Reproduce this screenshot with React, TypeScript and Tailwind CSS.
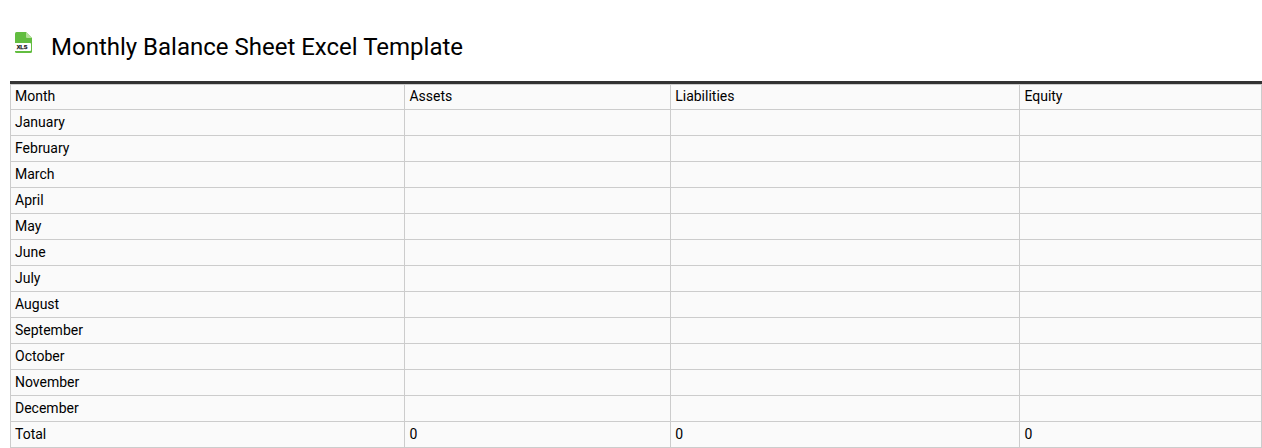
const months = ["January", "February", "March", "April", "May", "June", "July", "August", "September", "October", "November", "December"];

function XlsIcon() {
    return (
        <svg width="20" height="22" viewBox="0 0 20 22" className="shrink-0">
            <path d="M2 1.5 A1.5 1.5 0 0 1 3.5 0 H13 L19 6 V19.5 A1.5 1.5 0 0 1 17.5 21 H3.5 A1.5 1.5 0 0 1 2 19.5 Z" fill="#62bd40" />
            <path d="M13 0 L19 6 H14 A1 1 0 0 1 13 5 Z" fill="#b4e09a" />
            <rect x="0" y="11" width="18" height="8" rx="1" fill="#ffffff" />
            <text x="9" y="17" textAnchor="middle" fontSize="5.5" fontWeight="700" fontFamily="'Liberation Sans', sans-serif" fill="#111111" stroke="#111111" strokeWidth="0.25">XLS</text>
        </svg>
    );
}

function Row({ cells, first }: { cells: string[]; first?: boolean }) {
    return (
        <tr className={first ? "h-[25px]" : "h-[26px]"}>
            {cells.map((c, i) => (
                <td key={i} className="border border-[#cccccc] px-1 pt-0 pb-[2px] align-middle">{c}</td>
            ))}
        </tr>
    );
}

export default function App() {
    return (
        <div className="bg-white h-[448px] overflow-hidden font-['Roboto',sans-serif] text-black">
            <div className="flex h-[81px] pl-[13px] pt-[32px]">
                <XlsIcon />
                <h1 className="ml-[18px] text-2xl leading-[30px] font-normal">Monthly Balance Sheet Excel Template</h1>
            </div>
            <div className="ml-[10px] border-t-[3px] border-[#333333]">
                <table className="w-full table-fixed border-collapse bg-[#fafafa] text-sm">
                    <colgroup>
                        <col className="w-[394.4px]" />
                        <col className="w-[265.8px]" />
                        <col className="w-[349.2px]" />
                        <col />
                    </colgroup>
                    <tbody>
                        <Row first cells={["Month", "Assets", "Liabilities", "Equity"]} />
                        {months.map((m) => (
                            <Row key={m} cells={[m, "", "", ""]} />
                        ))}
                        <Row cells={["Total", "0", "0", "0"]} />
                    </tbody>
                </table>
            </div>
        </div>
    );
}
